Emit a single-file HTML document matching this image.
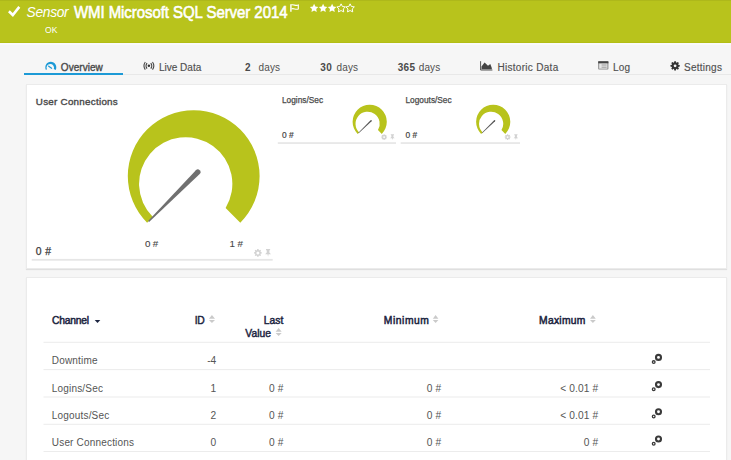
<!DOCTYPE html>
<html><head><meta charset="utf-8"><style>
html,body{margin:0;padding:0;}
body{width:731px;height:460px;overflow:hidden;background:#f6f6f6;position:relative;font-family:"Liberation Sans", sans-serif;}
.t{position:absolute;line-height:1;white-space:pre;}
#hdr{position:absolute;left:0;top:0;width:731px;height:43px;background:#b8c31c;}
.card{position:absolute;background:#fff;border:1px solid #ebebeb;box-shadow:0 1px 1px rgba(0,0,0,0.09);}
#tabline{position:absolute;left:24px;top:74px;width:707px;height:1px;background:#e8e8e8;}
#tabul{position:absolute;left:24px;top:73px;width:99px;height:2px;background:#1d9ad6;}
svg{position:absolute;left:0;top:0;}
</style></head><body>
<div id="hdr"></div>
<div style="position:absolute;left:0;top:0;width:731px;height:1px;background:#aeb81a;"></div>
<div style="position:absolute;left:0;top:42px;width:731px;height:1px;background:#b3be16;"></div>
<div style="position:absolute;left:0;top:43px;width:731px;height:2px;background:#fafafa;"></div>
<div id="tabline"></div>
<div id="tabul"></div>
<div class="card" style="left:26px;top:84px;width:699px;height:183px;"></div>
<div class="card" style="left:26px;top:277px;width:699px;height:200px;"></div>
<svg width="731" height="460" viewBox="0 0 731 460">
<path d="M147.10,222.70 A65.90,65.90 0 1 1 240.30,222.70 L225.61,208.01 A46.65,46.65 0 1 0 152.84,216.96 Z" fill="#b8c31c"/>
<path d="M149.09,221.89 L199.71,174.11 A2.70,2.70 0 0 0 195.89,170.29 L148.11,220.91 Z" fill="#707070"/>
<path d="M357.61,133.89 A17.10,17.10 0 1 1 381.79,133.89 L377.98,130.08 A12.10,12.10 0 1 0 359.10,132.40 Z" fill="#b8c31c"/>
<path d="M358.64,133.14 L371.59,121.30 A0.70,0.70 0 0 0 370.61,120.30 L358.36,132.86 Z" fill="#555"/>
<path d="M481.11,133.89 A17.10,17.10 0 1 1 505.29,133.89 L501.48,130.08 A12.10,12.10 0 1 0 482.60,132.40 Z" fill="#b8c31c"/>
<path d="M482.14,133.14 L495.09,121.30 A0.70,0.70 0 0 0 494.11,120.30 L481.86,132.86 Z" fill="#555"/>
<path d="M256.99,250.24 L257.23,249.06 L258.57,249.06 L258.81,250.24 L259.14,250.38 L260.14,249.71 L261.09,250.66 L260.42,251.66 L260.56,251.99 L261.74,252.23 L261.74,253.57 L260.56,253.81 L260.42,254.14 L261.09,255.14 L260.14,256.09 L259.14,255.42 L258.81,255.56 L258.57,256.74 L257.23,256.74 L256.99,255.56 L256.66,255.42 L255.66,256.09 L254.71,255.14 L255.38,254.14 L255.24,253.81 L254.06,253.57 L254.06,252.23 L255.24,251.99 L255.38,251.66 L254.71,250.66 L255.66,249.71 L256.66,250.38 Z M259.40,252.90 A1.50,1.50 0 1 0 256.40,252.90 A1.50,1.50 0 1 0 259.40,252.90 Z" fill="#d2d2d2" fill-rule="evenodd"/>
<path d="M265.99,249.00 L270.12,249.00 L270.12,249.94 L269.35,250.56 L269.35,252.51 L271.00,254.30 L265.10,254.30 L266.75,252.51 L266.75,250.56 L265.99,249.94 Z M267.55,254.30 L268.55,254.30 L268.05,256.80 Z" fill="#d2d2d2"/>
<path d="M383.40,135.06 L383.58,134.14 L384.62,134.14 L384.80,135.06 L385.05,135.16 L385.83,134.65 L386.55,135.37 L386.04,136.15 L386.14,136.40 L387.06,136.58 L387.06,137.62 L386.14,137.80 L386.04,138.05 L386.55,138.83 L385.83,139.55 L385.05,139.04 L384.80,139.14 L384.62,140.06 L383.58,140.06 L383.40,139.14 L383.15,139.04 L382.37,139.55 L381.65,138.83 L382.16,138.05 L382.06,137.80 L381.14,137.62 L381.14,136.58 L382.06,136.40 L382.16,136.15 L381.65,135.37 L382.37,134.65 L383.15,135.16 Z M385.05,137.10 A0.95,0.95 0 1 0 383.15,137.10 A0.95,0.95 0 1 0 385.05,137.10 Z" fill="#d2d2d2" fill-rule="evenodd"/>
<path d="M390.79,134.30 L394.01,134.30 L394.01,135.00 L393.41,135.46 L393.41,136.91 L394.70,138.24 L390.10,138.24 L391.39,136.91 L391.39,135.46 L390.79,135.00 Z M391.90,138.24 L392.90,138.24 L392.40,140.10 Z" fill="#d2d2d2"/>
<path d="M506.90,135.06 L507.08,134.14 L508.12,134.14 L508.30,135.06 L508.55,135.16 L509.33,134.65 L510.05,135.37 L509.54,136.15 L509.64,136.40 L510.56,136.58 L510.56,137.62 L509.64,137.80 L509.54,138.05 L510.05,138.83 L509.33,139.55 L508.55,139.04 L508.30,139.14 L508.12,140.06 L507.08,140.06 L506.90,139.14 L506.65,139.04 L505.87,139.55 L505.15,138.83 L505.66,138.05 L505.56,137.80 L504.64,137.62 L504.64,136.58 L505.56,136.40 L505.66,136.15 L505.15,135.37 L505.87,134.65 L506.65,135.16 Z M508.55,137.10 A0.95,0.95 0 1 0 506.65,137.10 A0.95,0.95 0 1 0 508.55,137.10 Z" fill="#d2d2d2" fill-rule="evenodd"/>
<path d="M514.29,134.30 L517.51,134.30 L517.51,135.00 L516.91,135.46 L516.91,136.91 L518.20,138.24 L513.60,138.24 L514.89,136.91 L514.89,135.46 L514.29,135.00 Z M515.40,138.24 L516.40,138.24 L515.90,140.10 Z" fill="#d2d2d2"/>
<rect x="31.7" y="258.9" width="241" height="1.8" fill="#e6e6e6"/>
<rect x="277.8" y="142.2" width="118.2" height="1.7" fill="#e6e6e6"/>
<rect x="400.7" y="142.2" width="119.3" height="1.7" fill="#e6e6e6"/>
<rect x="43.5" y="341.8" width="666.5" height="1" fill="#ececec"/>
<rect x="43.5" y="369.1" width="666.5" height="1" fill="#ececec"/>
<rect x="43.5" y="396.5" width="666.5" height="1" fill="#ececec"/>
<rect x="43.5" y="423.8" width="666.5" height="1" fill="#ececec"/>
<rect x="43.5" y="451.0" width="666.5" height="1" fill="#ececec"/>
<path d="M208.90,318.80 L211.95,315.00 L215.00,318.80 Z M208.90,320.00 L215.00,320.00 L211.95,323.10 Z" fill="#cacaca"/>
<path d="M275.60,331.80 L278.65,328.00 L281.70,331.80 Z M275.60,333.00 L281.70,333.00 L278.65,336.10 Z" fill="#cacaca"/>
<path d="M432.80,318.80 L435.60,315.00 L438.40,318.80 Z M432.80,320.00 L438.40,320.00 L435.60,323.10 Z" fill="#cacaca"/>
<path d="M590.00,318.80 L592.90,315.00 L595.80,318.80 Z M590.00,320.00 L595.80,320.00 L592.90,323.10 Z" fill="#cacaca"/>
<path d="M94.7,320 L100.3,320 L97.5,323 Z" fill="#1c2541"/>
<circle cx="658.5" cy="357.40" r="2.5" fill="none" stroke="#3a3a3a" stroke-width="2.1"/>
<circle cx="653.7" cy="362.10" r="1.35" fill="none" stroke="#3a3a3a" stroke-width="1.3"/>
<circle cx="658.5" cy="384.60" r="2.5" fill="none" stroke="#3a3a3a" stroke-width="2.1"/>
<circle cx="653.7" cy="389.30" r="1.35" fill="none" stroke="#3a3a3a" stroke-width="1.3"/>
<circle cx="658.5" cy="411.80" r="2.5" fill="none" stroke="#3a3a3a" stroke-width="2.1"/>
<circle cx="653.7" cy="416.50" r="1.35" fill="none" stroke="#3a3a3a" stroke-width="1.3"/>
<circle cx="658.5" cy="439.00" r="2.5" fill="none" stroke="#3a3a3a" stroke-width="2.1"/>
<circle cx="653.7" cy="443.70" r="1.35" fill="none" stroke="#3a3a3a" stroke-width="1.3"/>
<path d="M8.9,11.3 L12.8,15.0 L19.3,6.9" fill="none" stroke="#fff" stroke-width="2.6" stroke-linecap="butt"/>
<path d="M290.9,4.2 L290.9,11.8" stroke="#fff" stroke-width="1.4" fill="none"/>
<path d="M291.4,4.9 C293.8,4.0 295.6,6.4 298.3,5.1 L298.3,8.9 C295.6,10.2 293.8,7.8 291.4,8.9" stroke="#fff" stroke-width="1.15" fill="none"/>
<path d="M314.10,3.85 L315.41,6.50 L318.33,6.92 L316.22,8.99 L316.72,11.90 L314.10,10.53 L311.48,11.90 L311.98,8.99 L309.87,6.92 L312.79,6.50 Z" fill="#fff"/>
<path d="M323.10,3.85 L324.41,6.50 L327.33,6.92 L325.22,8.99 L325.72,11.90 L323.10,10.53 L320.48,11.90 L320.98,8.99 L318.87,6.92 L321.79,6.50 Z" fill="#fff"/>
<path d="M332.10,3.85 L333.41,6.50 L336.33,6.92 L334.22,8.99 L334.72,11.90 L332.10,10.53 L329.48,11.90 L329.98,8.99 L327.87,6.92 L330.79,6.50 Z" fill="#fff"/>
<path d="M341.10,3.85 L342.41,6.50 L345.33,6.92 L343.22,8.99 L343.72,11.90 L341.10,10.53 L338.48,11.90 L338.98,8.99 L336.87,6.92 L339.79,6.50 Z" fill="none" stroke="#fff" stroke-width="1.0"/>
<path d="M350.10,3.85 L351.41,6.50 L354.33,6.92 L352.22,8.99 L352.72,11.90 L350.10,10.53 L347.48,11.90 L347.98,8.99 L345.87,6.92 L348.79,6.50 Z" fill="none" stroke="#fff" stroke-width="1.0"/>
<path d="M45.94,69.88 A5.50,5.50 0 1 1 55.66,69.88 L53.85,68.92 A3.75,3.75 0 1 0 46.93,69.36 Z" fill="#1d9ad6"/>
<path d="M48.7,66.2 L51.6,68.2" stroke="#1d9ad6" stroke-width="1.3" stroke-linecap="round"/>
<circle cx="148.9" cy="65.8" r="1.25" fill="#333"/>
<path d="M147.0,63.0 A4.8,4.8 0 0 0 147.0,68.6 M150.8,63.0 A4.8,4.8 0 0 1 150.8,68.6" fill="none" stroke="#444" stroke-width="1.05"/>
<path d="M145.3,62.0 A6.6,6.6 0 0 0 145.3,69.6 M152.5,62.0 A6.6,6.6 0 0 1 152.5,69.6" fill="none" stroke="#444" stroke-width="1.05"/>
<path d="M480.6,61.2 L480.6,70 L492.4,70" fill="none" stroke="#555" stroke-width="1"/>
<path d="M481.5,69.3 L481.5,66.5 L484.6,62.6 L488.0,65.8 L490.3,64.0 L491.8,68 L491.8,69.3 Z" fill="#444"/>
<rect x="598.2" y="61.3" width="10.2" height="8.2" rx="0.8" fill="#888"/>
<rect x="598.2" y="61.3" width="10.2" height="2" fill="#444"/>
<rect x="599.2" y="63.5" width="8.2" height="5.2" fill="#e6e6e6"/>
<path d="M601.6,65.0 L606.6,65.0 M601.6,67.2 L606.6,67.2" stroke="#888" stroke-width="0.8"/>
<path d="M674.00,62.60 L674.29,61.17 L675.91,61.17 L676.20,62.60 L676.59,62.76 L677.80,61.95 L678.95,63.10 L678.14,64.31 L678.30,64.70 L679.73,64.99 L679.73,66.61 L678.30,66.90 L678.14,67.29 L678.95,68.50 L677.80,69.65 L676.59,68.84 L676.20,69.00 L675.91,70.43 L674.29,70.43 L674.00,69.00 L673.61,68.84 L672.40,69.65 L671.25,68.50 L672.06,67.29 L671.90,66.90 L670.47,66.61 L670.47,64.99 L671.90,64.70 L672.06,64.31 L671.25,63.10 L672.40,61.95 L673.61,62.76 Z M676.50,65.80 A1.40,1.40 0 1 0 673.70,65.80 A1.40,1.40 0 1 0 676.50,65.80 Z" fill="#333" fill-rule="evenodd"/>
</svg>
<div class="t" style="left:26.50px;top:6.00px;font-size:13.8px;color:#fff;font-weight:normal;font-style:italic;letter-spacing:-0.3px;">Sensor</div>
<div class="t" style="left:73.90px;top:5.00px;font-size:15px;color:#fff;font-weight:normal;font-style:normal;letter-spacing:-0.06px;transform:scaleY(1.09);transform-origin:0 13px;-webkit-text-stroke:0.55px #fff;">WMI Microsoft SQL Server 2014</div>
<div class="t" style="left:44.60px;top:25.00px;font-size:9.6px;color:#fff;font-weight:normal;font-style:normal;letter-spacing:0.15px;transform:scaleX(0.89);transform-origin:0 0;">OK</div>
<div class="t" style="left:60.80px;top:63.00px;font-size:10px;color:#4a4a4a;font-weight:normal;font-style:normal;letter-spacing:0.05px;-webkit-text-stroke:0.35px #4a4a4a;">Overview</div>
<div class="t" style="left:159.00px;top:63.00px;font-size:10px;color:#505050;font-weight:normal;font-style:normal;letter-spacing:0px;-webkit-text-stroke:0.15px #505050;">Live Data</div>
<div class="t" style="left:245.00px;top:63.00px;font-size:10px;color:#4a4a4a;font-weight:bold;font-style:normal;letter-spacing:0px;">2</div>
<div class="t" style="left:258.50px;top:63.00px;font-size:10px;color:#505050;font-weight:normal;font-style:normal;letter-spacing:0.15px;">days</div>
<div class="t" style="left:320.20px;top:63.00px;font-size:10px;color:#4a4a4a;font-weight:bold;font-style:normal;letter-spacing:0.6px;">30</div>
<div class="t" style="left:336.50px;top:63.00px;font-size:10px;color:#505050;font-weight:normal;font-style:normal;letter-spacing:0.15px;">days</div>
<div class="t" style="left:397.70px;top:63.00px;font-size:10px;color:#4a4a4a;font-weight:bold;font-style:normal;letter-spacing:0.3px;">365</div>
<div class="t" style="left:418.70px;top:63.00px;font-size:10px;color:#505050;font-weight:normal;font-style:normal;letter-spacing:0.15px;">days</div>
<div class="t" style="left:497.40px;top:63.00px;font-size:10px;color:#505050;font-weight:normal;font-style:normal;letter-spacing:0.3px;-webkit-text-stroke:0.15px #505050;">Historic Data</div>
<div class="t" style="left:613.00px;top:63.00px;font-size:10px;color:#505050;font-weight:normal;font-style:normal;letter-spacing:0.2px;-webkit-text-stroke:0.15px #505050;">Log</div>
<div class="t" style="left:684.00px;top:63.00px;font-size:10px;color:#505050;font-weight:normal;font-style:normal;letter-spacing:0.25px;-webkit-text-stroke:0.15px #505050;">Settings</div>
<div class="t" style="left:35.80px;top:97.00px;font-size:9.8px;color:#4c4c4c;font-weight:normal;font-style:normal;letter-spacing:0.27px;-webkit-text-stroke:0.4px #4c4c4c;">User Connections</div>
<div class="t" style="left:35.70px;top:247.00px;font-size:10.4px;color:#3a3a3a;font-weight:normal;font-style:normal;letter-spacing:0.45px;-webkit-text-stroke:0.25px #3a3a3a;">0 #</div>
<div class="t" style="left:144.90px;top:239.00px;font-size:9.8px;color:#444;font-weight:normal;font-style:normal;letter-spacing:-0.15px;-webkit-text-stroke:0.1px #444;">0 #</div>
<div class="t" style="left:229.60px;top:239.00px;font-size:9.8px;color:#444;font-weight:normal;font-style:normal;letter-spacing:-0.15px;-webkit-text-stroke:0.1px #444;">1 #</div>
<div class="t" style="left:282.00px;top:96.00px;font-size:8.3px;color:#4a4a4a;font-weight:normal;font-style:normal;letter-spacing:0px;-webkit-text-stroke:0.25px #4a4a4a;">Logins/Sec</div>
<div class="t" style="left:282.00px;top:131.00px;font-size:8.4px;color:#444;font-weight:normal;font-style:normal;letter-spacing:0px;-webkit-text-stroke:0.2px #444;">0 #</div>
<div class="t" style="left:405.50px;top:96.00px;font-size:8.3px;color:#4a4a4a;font-weight:normal;font-style:normal;letter-spacing:0px;-webkit-text-stroke:0.25px #4a4a4a;">Logouts/Sec</div>
<div class="t" style="left:405.50px;top:131.00px;font-size:8.4px;color:#444;font-weight:normal;font-style:normal;letter-spacing:0px;-webkit-text-stroke:0.2px #444;">0 #</div>
<div class="t" style="left:52.00px;top:316.00px;font-size:10.3px;color:#1c2541;font-weight:normal;font-style:normal;letter-spacing:-0.2px;-webkit-text-stroke:0.5px #1c2541;">Channel</div>
<div class="t" style="left:194.80px;top:316.00px;font-size:10.3px;color:#1c2541;font-weight:normal;font-style:normal;letter-spacing:-0.35px;-webkit-text-stroke:0.45px #1c2541;">ID</div>
<div class="t" style="right:447.70px;top:316.00px;font-size:10.3px;color:#1c2541;font-weight:normal;font-style:normal;letter-spacing:0px;-webkit-text-stroke:0.45px #1c2541;">Last</div>
<div class="t" style="right:460.10px;top:329.00px;font-size:10.3px;color:#1c2541;font-weight:normal;font-style:normal;letter-spacing:0px;-webkit-text-stroke:0.45px #1c2541;">Value</div>
<div class="t" style="left:383.80px;top:316.00px;font-size:10.3px;color:#1c2541;font-weight:normal;font-style:normal;letter-spacing:0.55px;-webkit-text-stroke:0.5px #1c2541;">Minimum</div>
<div class="t" style="left:539.00px;top:316.00px;font-size:10.3px;color:#1c2541;font-weight:normal;font-style:normal;letter-spacing:0.3px;-webkit-text-stroke:0.5px #1c2541;">Maximum</div>
<div class="t" style="left:51.80px;top:356.00px;font-size:10px;color:#555;font-weight:normal;font-style:normal;letter-spacing:0.18px;">Downtime</div>
<div class="t" style="right:514.80px;top:356.00px;font-size:10.2px;color:#555;font-weight:normal;font-style:normal;letter-spacing:0px;">-4</div>
<div class="t" style="left:51.80px;top:384.00px;font-size:10px;color:#555;font-weight:normal;font-style:normal;letter-spacing:0.18px;">Logins/Sec</div>
<div class="t" style="right:514.80px;top:384.00px;font-size:10.2px;color:#555;font-weight:normal;font-style:normal;letter-spacing:0px;">1</div>
<div class="t" style="right:447.50px;top:384.00px;font-size:10.2px;color:#555;font-weight:normal;font-style:normal;letter-spacing:0.1px;">0 #</div>
<div class="t" style="right:289.80px;top:384.00px;font-size:10.2px;color:#555;font-weight:normal;font-style:normal;letter-spacing:0.1px;">0 #</div>
<div class="t" style="right:132.80px;top:384.00px;font-size:10.2px;color:#555;font-weight:normal;font-style:normal;letter-spacing:0.1px;">&lt; 0.01 #</div>
<div class="t" style="left:51.80px;top:411.00px;font-size:10px;color:#555;font-weight:normal;font-style:normal;letter-spacing:0.18px;">Logouts/Sec</div>
<div class="t" style="right:514.80px;top:411.00px;font-size:10.2px;color:#555;font-weight:normal;font-style:normal;letter-spacing:0px;">2</div>
<div class="t" style="right:447.50px;top:411.00px;font-size:10.2px;color:#555;font-weight:normal;font-style:normal;letter-spacing:0.1px;">0 #</div>
<div class="t" style="right:289.80px;top:411.00px;font-size:10.2px;color:#555;font-weight:normal;font-style:normal;letter-spacing:0.1px;">0 #</div>
<div class="t" style="right:132.80px;top:411.00px;font-size:10.2px;color:#555;font-weight:normal;font-style:normal;letter-spacing:0.1px;">&lt; 0.01 #</div>
<div class="t" style="left:51.80px;top:438.00px;font-size:10px;color:#555;font-weight:normal;font-style:normal;letter-spacing:0.18px;">User Connections</div>
<div class="t" style="right:514.80px;top:438.00px;font-size:10.2px;color:#555;font-weight:normal;font-style:normal;letter-spacing:0px;">0</div>
<div class="t" style="right:447.50px;top:438.00px;font-size:10.2px;color:#555;font-weight:normal;font-style:normal;letter-spacing:0.1px;">0 #</div>
<div class="t" style="right:289.80px;top:438.00px;font-size:10.2px;color:#555;font-weight:normal;font-style:normal;letter-spacing:0.1px;">0 #</div>
<div class="t" style="right:132.80px;top:438.00px;font-size:10.2px;color:#555;font-weight:normal;font-style:normal;letter-spacing:0.1px;">0 #</div>
</body></html>
